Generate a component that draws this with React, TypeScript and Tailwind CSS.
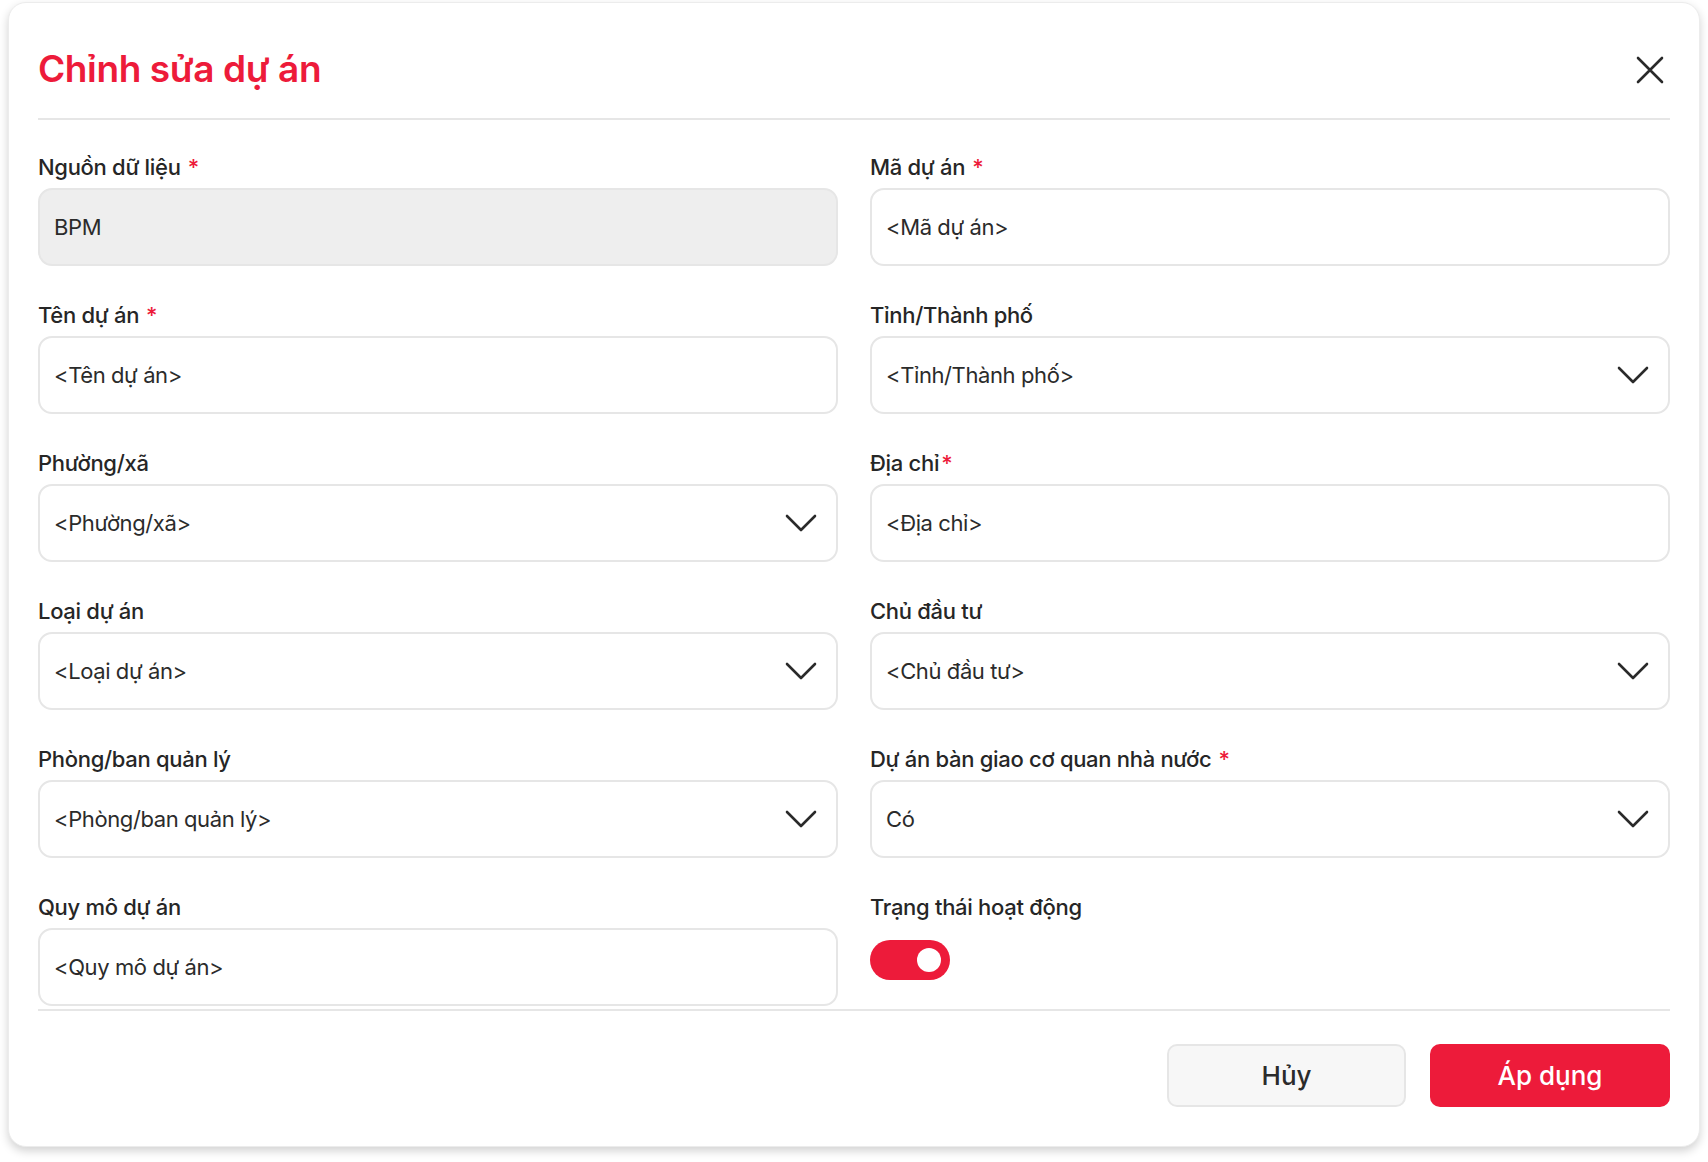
import React from "react";

function Chevron() {
  return (
    <svg width="32" height="18" viewBox="0 0 32 18" fill="none" className="shrink-0">
      <path d="M2 2 L16 16 L30 2" stroke="#2a2a2a" strokeWidth="2.6" strokeLinecap="round" strokeLinejoin="round" />
    </svg>
  );
}

type FieldProps = {
  label: string;
  required?: boolean;
  tightStar?: boolean;
  value: string;
  select?: boolean;
  disabled?: boolean;
};

function Field({ label, required, tightStar, value, select, disabled }: FieldProps) {
  return (
    <div className="flex flex-col">
      <div className="h-[28px] flex items-center text-[22px] leading-[28px] font-medium text-[#262626] tracking-[-0.3px]">
        <span>{label}</span>
        {required && (
          <span className={`${tightStar ? "ml-[2px]" : "ml-[7px]"} text-[#ED1B3A]`}>*</span>
        )}
      </div>
      <div
        className={`mt-[7px] h-[78px] rounded-[14px] border-2 border-[#e6e6e6] flex items-center justify-between pl-[14px] pr-[19px] ${
          disabled ? "bg-[#eeeeee]" : "bg-white"
        }`}
      >
        <span className="text-[22px] text-[#2b2b2b] tracking-[-0.4px]">{value}</span>
        {select && <Chevron />}
      </div>
    </div>
  );
}

export default function App() {
  return (
    <div
      className="w-[1708px] h-[1162px] bg-white pt-[2px] pl-[8px]"
      style={{ fontFamily: "Inter, 'Noto Sans', 'Liberation Sans', sans-serif" }}
    >
      <div className="w-[1692px] h-[1145px] bg-white rounded-[18px] border border-[#ececec] shadow-[0_4px_10px_rgba(0,0,0,0.18)] px-[29px] flex flex-col">
        {/* Header */}
        <div className="flex items-center justify-between pt-[44px] pb-[27px]">
          <h1 className="text-[37px] leading-[44px] font-semibold text-[#ED1B3A] tracking-[-0.4px]">
            Chỉnh sửa dự án
          </h1>
          <button className="mr-[6px] mt-[2px]" aria-label="close">
            <svg width="28" height="28" viewBox="0 0 28 28" fill="none">
              <path d="M2 2 L26 26 M26 2 L2 26" stroke="#2a2a2a" strokeWidth="2.6" strokeLinecap="round" />
            </svg>
          </button>
        </div>
        <div className="h-[2px] bg-[#e6e6e6]" />

        {/* Form */}
        <div className="grid grid-cols-2 gap-x-[32px] gap-y-[35px] pt-[33px]">
          <Field label="Nguồn dữ liệu" required value="BPM" disabled />
          <Field label="Mã dự án" required value="<Mã dự án>" />
          <Field label="Tên dự án" required value="<Tên dự án>" />
          <Field label="Tỉnh/Thành phố" value="<Tỉnh/Thành phố>" select />
          <Field label="Phường/xã" value="<Phường/xã>" select />
          <Field label="Địa chỉ" required tightStar value="<Địa chỉ>" />
          <Field label="Loại dự án" value="<Loại dự án>" select />
          <Field label="Chủ đầu tư" value="<Chủ đầu tư>" select />
          <Field label="Phòng/ban quản lý" value="<Phòng/ban quản lý>" select />
          <Field label="Dự án bàn giao cơ quan nhà nước" required value="Có" select />
          <Field label="Quy mô dự án" value="<Quy mô dự án>" />
          <div className="flex flex-col">
            <div className="h-[28px] flex items-center text-[22px] leading-[28px] font-medium text-[#262626] tracking-[-0.3px]">
              Trạng thái hoạt động
            </div>
            <div className="mt-[19px] w-[80px] h-[40px] rounded-full bg-[#ED1B3A] flex items-center justify-end pr-[9px]">
              <div className="w-[24px] h-[24px] rounded-full bg-white" />
            </div>
          </div>
        </div>

        <div className="h-[2px] bg-[#e6e6e6] mt-[3px]" />

        {/* Footer */}
        <div className="flex justify-end gap-[24px] pt-[33px]">
          <button className="w-[239px] h-[63px] rounded-[10px] border-2 border-[#e6e6e6] bg-[#f7f7f7] text-[26px] font-medium text-[#2b2b2b]">
            Hủy
          </button>
          <button className="w-[240px] h-[63px] rounded-[10px] bg-[#ED1B3A] text-[26px] font-medium text-white">
            Áp dụng
          </button>
        </div>
      </div>
    </div>
  );
}
